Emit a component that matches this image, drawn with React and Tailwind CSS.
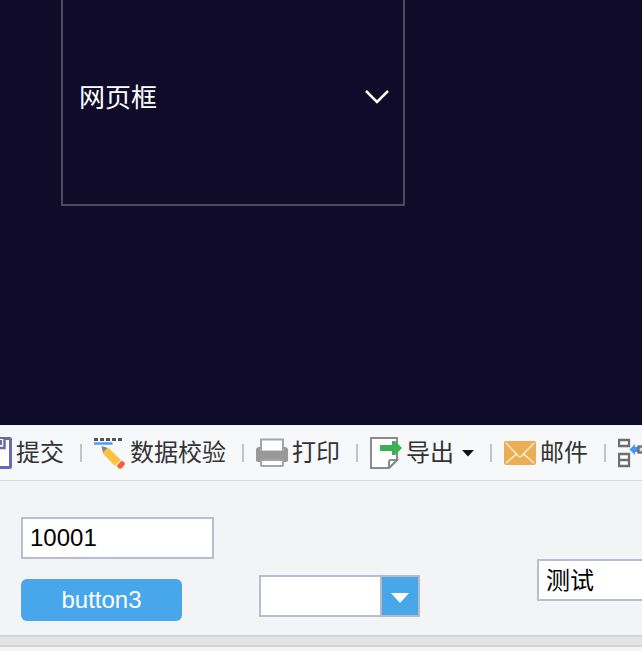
import React from "react";

const SaveIcon = () => (
  <svg className="h-8 w-8 shrink-0" viewBox="0 0 32 32" fill="none">
    <rect x="1.5" y="1.5" width="29" height="29" rx="1" fill="#fff" stroke="#6b68ae" strokeWidth="3" />
    <path d="M8 2v9h16.500V2" fill="#fff" stroke="#6b68ae" strokeWidth="2.500" />
    <path d="M20 3v5h2V3z" fill="#6b68ae" />
  </svg>
);

const PencilIcon = () => (
  <svg className="h-8 w-8 shrink-0" viewBox="0 0 32 32" fill="none">
    <path d="M0 2.500h29" stroke="#555" strokeWidth="2.800" strokeDasharray="4 2" />
    <path d="M0 6.500h18.500" stroke="#4a9df8" strokeWidth="2.500" />
    <path d="M7.500 9l6.500 2-5 5z" fill="#85868c" />
    <path d="M14 10.500l13 12.500-6 6L8.500 16z" fill="#fdc13c" />
    <path d="M27 23L21 29l1.500 1.500 6.500-6z" fill="#fff" />
    <path d="M27.500 23.500l3 2q1 1 0 2.500L28 31q-1.500 1-3 .5L22.500 29z" fill="#fb5d36" />
  </svg>
);

const PrintIcon = () => (
  <svg className="h-8 w-8 shrink-0" viewBox="0 0 32 32" fill="none">
    <path d="M2 10h28l2 2v12l-2 1H2l-2-1V12z" fill="#989898" />
    <rect x="5" y="2.500" width="22" height="12" fill="#fff" stroke="#a5a5a5" strokeWidth="2" />
    <rect x="4" y="14" width="25" height="8" fill="#989898" />
    <rect x="5" y="23" width="22" height="6" rx="1" fill="#fff" stroke="#a5a5a5" strokeWidth="2" />
  </svg>
);

const ExportIcon = () => (
  <svg className="h-8 w-8 shrink-0" viewBox="0 0 32 32" fill="none">
    <path d="M1 1h26v22l-8 8H1z" fill="#fff" stroke="#8a8a8a" strokeWidth="2" />
    <path d="M19 31v-6q0-2 2-2h6z" fill="#fff" stroke="#8a8a8a" strokeWidth="2" />
    <path d="M10 8h12V4h3l7 7-7 7h-3v-4H10z" fill="#3bb054" />
  </svg>
);

const MailIcon = () => (
  <svg className="h-8 w-8 shrink-0" viewBox="0 0 32 32" fill="none">
    <rect y="4" width="32" height="24" rx="2" fill="#ebae52" />
    <path d="M2 6l12.500 13q1.500 1.500 3 0L30 6M2 26l10.500-9M30 26L19.500 17" stroke="#fdf3e2" strokeWidth="1.300" />
  </svg>
);

const InsertIcon = () => (
  <svg className="h-8 w-8 shrink-0" viewBox="0 0 32 32" fill="none">
    <path d="M1 3h10v6H1zM1 17h10v12H1zM1 23h10" fill="#fff" stroke="#6e6e6e" strokeWidth="2.300" />
    <path d="M11.500 12.500L17 7v3h3v5h-3v3z" fill="#3d97f7" />
    <rect x="20.500" y="9.500" width="10" height="6" fill="#cfe6fc" stroke="#6e6e6e" strokeWidth="2.300" />
  </svg>
);

const ToolButton = ({ icon, label, menu }) => (
  <button type="button" aria-label={label || "插入"} className="flex shrink-0 items-center gap-1 whitespace-nowrap">
    {icon}
    {label && <span>{label}</span>}
    {menu && (
      <svg className="ml-1 h-2 w-3" viewBox="0 0 12 8">
        <path d="M0 1h12L6 7.500z" fill="#111" />
      </svg>
    )}
  </button>
);

const Divider = () => <span className="ml-4 mr-3 h-[18px] w-[2px] shrink-0 bg-[#c3c4c6]" />;

const App = () => {
  return (
    <div className="min-h-screen overflow-hidden bg-[#f5f5f6] font-['Liberation_Sans','Noto_Sans_CJK_SC',sans-serif] text-2xl">
      <header className="h-[425px] bg-[#100b29] pl-[61px]">
        <div className="grid w-[344px] items-center">
          <select
            aria-label="网页框"
            className="col-start-1 row-start-1 h-[206px] appearance-none border-2 border-t-0 border-[#4d485d] bg-transparent pb-2 pl-4 text-[26px] text-white"
          >
            <option>网页框</option>
          </select>
          <svg className="pointer-events-none col-start-1 row-start-1 mb-3 mr-4 h-4 w-6 justify-self-end" viewBox="0 0 24 16" fill="none">
            <path d="M1 2l11 11L23 2" stroke="#fff" strokeWidth="2.500" />
          </svg>
        </div>
      </header>

      <nav className="flex h-14 items-center overflow-hidden border-b border-[#d6d7da] bg-[#f7f8fa] text-[#333]">
        <div className="-ml-5 flex items-center">
          <ToolButton icon={<SaveIcon />} label="提交" />
          <Divider />
          <ToolButton icon={<PencilIcon />} label="数据校验" />
          <Divider />
          <ToolButton icon={<PrintIcon />} label="打印" />
          <Divider />
          <ToolButton icon={<ExportIcon />} label="导出" menu />
          <Divider />
          <ToolButton icon={<MailIcon />} label="邮件" />
          <Divider />
          <ToolButton icon={<InsertIcon />} />
        </div>
      </nav>

      <main className="flex items-start overflow-hidden bg-[#f3f4f6] pb-[14px] pl-[21px] pt-9 text-black">
        <div className="flex w-[193px] shrink-0 flex-col gap-5">
          <input
            aria-label="编号"
            defaultValue="10001"
            className="h-[42px] w-full border-2 border-[#babdd0] bg-white px-[7px]"
          />
          <button type="button" className="h-[42px] w-[161px] rounded-md bg-[#48a7ea] text-white">
            button3
          </button>
        </div>
        <div className="ml-[45px] mt-[58px] grid w-[161px] shrink-0">
          <select
            aria-label="选项"
            className="col-start-1 row-start-1 h-[42px] appearance-none border-2 border-[#babdd0] bg-white pl-[7px] pr-10"
          >
            <option></option>
          </select>
          <span className="pointer-events-none col-start-1 row-start-1 flex w-10 items-center justify-center justify-self-end border-2 border-[#b3bac8] bg-[#48a7ea] pt-1">
            <svg className="h-3 w-5" viewBox="0 0 20 12">
              <path d="M1 1h18l-9 10z" fill="#fff" />
            </svg>
          </span>
        </div>
        <input
          aria-label="名称"
          defaultValue="测试"
          className="ml-[117px] mt-[42px] h-[42px] w-[193px] shrink-0 border-2 border-[#babdd0] bg-white px-[7px] pb-1"
        />
      </main>

      <div className="h-3 border-y-2 border-[#d4d3d4] bg-[#e4e4e4]" />
    </div>
  );
};

export default App;
